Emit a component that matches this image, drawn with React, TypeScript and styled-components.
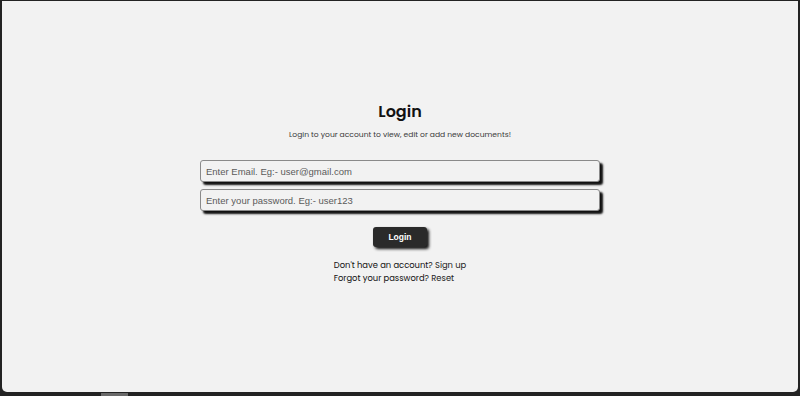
import styled, { createGlobalStyle } from "styled-components";

const Global = createGlobalStyle`
  html, body { margin: 0; padding: 0; background: #232323; }
  * { box-sizing: border-box; }
`;

export default function App() {
  return (
    <>
      <Global />
      <Frame>
        <Page>
          <Title>Login</Title>
          <Subtitle>Login to your account to view, edit or add new documents!</Subtitle>
          <Form onSubmit={(e) => e.preventDefault()}>
            <Input type="email" placeholder="Enter Email. Eg:- user@gmail.com" />
            <Input type="password" placeholder="Enter your password. Eg:- user123" />
            <Button type="submit">Login</Button>
          </Form>
          <Hints>
            <Hint>Don't have an account? <Link>Sign up</Link></Hint>
            <Hint>Forgot your password? <Link>Reset</Link></Hint>
          </Hints>
        </Page>
        <ScrollThumb />
      </Frame>
    </>
  );
}

const Frame = styled.div`
  position: relative;
  width: 800px;
  height: 396px;
  padding: 1px 2px 4px 2px;
  background: #232323;
`;

const Page = styled.div`
  height: 100%;
  background: #f2f2f2;
  border-radius: 0 0 5px 5px;
  display: flex;
  flex-direction: column;
  align-items: center;
  padding-top: 100px;
  font-family: "Poppins", "Lato", "DejaVu Sans", sans-serif;
  color: #111;
`;

const Title = styled.h1`
  margin: 0;
  font-size: 16px;
  font-weight: 600;
  line-height: 22px;
`;

const Subtitle = styled.p`
  margin: 6px 0 0;
  font-size: 7.6px;
  color: #3a3a3a;
  line-height: 11px;
`;

const Form = styled.form`
  display: flex;
  flex-direction: column;
  align-items: center;
  gap: 7px;
  margin-top: 20px;
`;

const Input = styled.input`
  width: 400px;
  height: 22px;
  padding: 0 5px;
  border: 1px solid #8a8a8a;
  border-radius: 3px;
  background: #f2f2f2;
  box-shadow: 3px 3px 2px #111;
  font-family: "Liberation Sans", Arial, sans-serif;
  font-size: 9.5px;
  outline: none;
  &::placeholder { color: #5a5a5a; }
`;

const Button = styled.button`
  margin-top: 9px;
  width: 54px;
  height: 20px;
  border: none;
  border-radius: 3px;
  background: #2a2a2a;
  color: #fff;
  font-family: "Liberation Sans", Arial, sans-serif;
  font-size: 8.5px;
  font-weight: 700;
  box-shadow: 2px 2px 3px #111;
  cursor: pointer;
`;

const Hints = styled.div`
  display: flex;
  flex-direction: column;
  align-items: flex-start;
  margin-top: 12px;
`;

const Hint = styled.div`
  font-size: 8.4px;
  line-height: 13px;
  color: #111;
`;

const Link = styled.span`
  color: #222;
  cursor: pointer;
`;

const ScrollThumb = styled.div`
  position: absolute;
  left: 101px;
  bottom: 0;
  width: 27px;
  height: 3px;
  background: #6a6a6a;
`;
